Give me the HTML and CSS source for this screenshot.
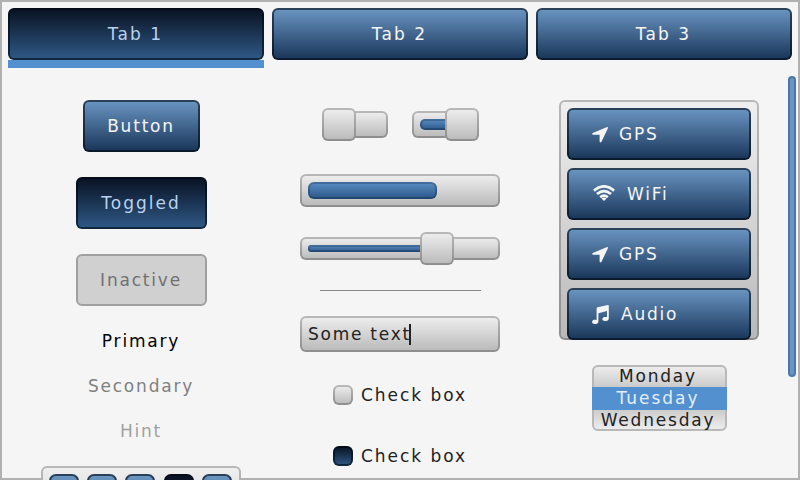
FILE: index.html
```html
<!DOCTYPE html>
<html lang="en">
<head>
<meta charset="utf-8">
<title>Widgets</title>
<link rel="stylesheet" href="styles.css">
</head>
<body>
<svg class="defs" width="0" height="0">
  <symbol id="gps" viewBox="0 0 16 16"><path d="M15.2 0 .7 6Q-.4 7 .9 7.8H7.6V14.6Q8.3 16.4 9.5 14.8L16 1.1Q16.1-.1 15.2 0Z"/></symbol>
</svg>
<div class="screen">
  <nav class="tabs">
    <div class="tab"><div class="btn on">Tab 1</div></div>
    <div class="tab"><div class="btn">Tab 2</div></div>
    <div class="tab"><div class="btn">Tab 3</div></div>
  </nav>
  <main class="page">
    <section class="col left">
      <div class="btn push">Button</div>
      <div class="btn push wide on">Toggled</div>
      <div class="btn push wide off">Inactive</div>
      <div class="label primary">Primary</div>
      <div class="label secondary">Secondary</div>
      <div class="label hint">Hint</div>
      <div class="keys panel"><i class="key"></i><i class="key"></i><i class="key"></i><i class="key on"></i><i class="key"></i></div>
    </section>
    <section class="col middle">
      <div class="switches">
        <div class="switch"><div class="panel knob"></div><div class="panel track after"></div></div>
        <div class="switch"><div class="panel track before"><div class="fill"></div></div><div class="panel knob"></div></div>
      </div>
      <div class="panel bar"><div class="fill"></div></div>
      <div class="panel slider"><div class="fill"></div><div class="panel knob"></div></div>
      <hr class="line">
      <div class="panel field">Some text<i class="caret"></i></div>
      <div class="check"><i class="panel box"></i>Check box</div>
      <div class="check second"><i class="box on"></i>Check box</div>
    </section>
    <section class="col right">
      <div class="panel list">
        <div class="btn item"><svg class="gps"><use href="#gps"/></svg>GPS</div>
        <div class="btn item"><svg class="wifi" viewBox="0 0 22 16"><g fill="none" stroke="#f5f5f5" stroke-width="2.7"><path d="M.9 5.6Q11-2.9 21.1 5.6M4 9.1Q11 3 18 9.1M7.2 12.3Q11 8.9 14.8 12.3"/></g><path d="M8.5 13.4Q11 11.8 13.5 13.4L11 16Z"/></svg>WiFi</div>
        <div class="btn item"><svg class="gps"><use href="#gps"/></svg>GPS</div>
        <div class="btn item"><svg class="audio" viewBox="0 0 17 19"><path d="M4.6 3.4Q4.6 2.5 5.5 2.2L15.8.1Q16.8-.1 16.8.9V13.4C16.8 16.5 10.3 17 10.3 14.1 10.3 11.9 13 11.6 15 12.1V6L6.4 8.2V16.4C6.4 19.6.1 19.9.1 17 .1 14.8 2.7 14.6 4.6 15.1Z"/></svg>Audio</div>
      </div>
      <div class="roller"><div>Monday</div><div class="picked">Tuesday</div><div>Wednesday</div></div>
    </section>
  </main>
  <div class="scroll"></div>
</div>
</body>
</html>
```
FILE: styles.css
```css
* { box-sizing: border-box; }
body {
  margin: 0;
  font: 17px/20px "DejaVu Sans", sans-serif;
  letter-spacing: 1.8px;
  color: #222;
}
.defs { position: absolute; }
.screen {
  position: relative;
  width: 800px;
  height: 480px;
  overflow: hidden;
  background: #f5f5f5;
  padding: 8px;
}
.screen::after {
  content: "";
  position: absolute;
  inset: 0;
  border: 2px solid #b0b0b0;
  z-index: 0;
}
.tabs { display: flex; gap: 8px; height: 60px; letter-spacing: 2.1px; }
.tab { flex: 1; }
.tab .btn { padding-right: 1px; }
.tab:first-child { background: linear-gradient(#5290d0, #5290d0) 0 52px no-repeat; }
.btn {
  display: flex;
  align-items: center;
  justify-content: center;
  height: 52px;
  border: 2px solid rgba(0, 8, 16, .6);
  border-radius: 6px;
  background: linear-gradient(#6b97c4, #183457) border-box;
  color: #f5f5f5;
}
.on {
  background: linear-gradient(#081020, #305a88) border-box;
  color: #b8d2ee;
}
.off { background: #d0d0d0; border-color: #a0a0a0; color: #707070; }
.panel {
  border: 2px solid rgba(0, 0, 0, .23);
  border-radius: 6px;
  background: linear-gradient(#f0f0f0, #b8b8b8) border-box;
}
.page {
  display: grid;
  grid-template-columns: 266px 252px 266px;
  padding-top: 32px;
}
.col { display: flex; flex-direction: column; align-items: center; }
.left { position: relative; z-index: 1; }
.push { width: 117px; margin-bottom: 25px; }
.push.wide { width: 131px; }
.push.on { letter-spacing: 2px; }
.label { margin-bottom: 25px; }
.primary { color: #000; }
.secondary { color: #808080; }
.hint { color: #a0a0a0; }
.keys {
  display: flex;
  gap: 8px;
  width: 200px;
  height: 100px;
  padding: 6px;
}
.key {
  flex: none;
  width: 30px;
  height: 80px;
  border: 2px solid rgba(0, 8, 16, .6);
  border-radius: 7px;
  background: linear-gradient(#6b97c4, #183457) border-box;
}
.key.on { margin-left: 1px; background: linear-gradient(#081020, #305a88) border-box; }
.middle { padding-top: 8px; }
.switches { display: flex; gap: 24px; }
.switch { display: flex; align-items: center; height: 33px; }
.knob { flex: none; width: 34px; height: 33px; position: relative; }
.track { height: 27px; }
.after { width: 38px; margin-left: -6px; }
.switch:first-child .knob { z-index: 1; }
.before { width: 39px; margin-right: -6px; padding: 6px; }
.fill {
  border: 2px solid rgba(0, 20, 40, .25);
  border-radius: 6px;
  background: linear-gradient(#5c8fc4, #2a5588) border-box;
}
.before .fill { width: 40px; height: 11px; border-radius: 5px; }
.before { overflow: hidden; }
.bar { width: 200px; height: 33px; margin-top: 33px; padding: 6px; }
.bar .fill { width: 129px; height: 17px; }
.slider {
  display: flex;
  align-items: center;
  width: 200px;
  height: 23px;
  margin-top: 30px;
  padding: 0 6px;
}
.slider .fill { width: 118px; height: 7px; border-radius: 3px; }
.slider .knob { margin-left: -6px; }
.line { width: 161px; height: 1px; margin: 30px 0 25px; border: 0; background: #888; }
.field {
  display: flex;
  align-items: center;
  width: 200px;
  height: 36px;
  padding: 0 6px;
  letter-spacing: 1.75px;
}
.caret { width: 2px; height: 21px; margin-left: -2px; background: #222; }
.check { display: flex; align-items: center; gap: 8px; width: 134px; margin-top: 33px; white-space: nowrap; letter-spacing: 1.95px; }
.check.second { margin-top: 41px; }
.box { width: 20px; height: 20px; border: 2px solid rgba(0, 0, 0, .23); border-radius: 6px; }
.box.on { border-color: rgba(0, 8, 16, .6); }
.list { width: 200px; height: 240px; padding: 6px; }
.item { justify-content: flex-start; margin-bottom: 8px; padding-left: 22px; }
.item svg { fill: #f5f5f5; flex: none; }
.gps { width: 16px; height: 16px; margin: 2px 11px 0 1px; }
.wifi { width: 22px; height: 16px; margin: 0 12px 2px 2px; }
.audio { width: 17px; height: 19px; margin: 1px 12px 0 1px; }
.roller {
  width: 135px;
  height: 66px;
  margin-top: 25px;
  padding-right: 0;
  border-radius: 6px;
  background: linear-gradient(#f0f0f0, #b8b8b8 50%, #f0f0f0);
  box-shadow: inset 0 0 0 2px #b8b8b8;
  text-align: center;
  line-height: 22px;
}
.roller div { padding-right: 2px; }
.picked { height: 23px; margin-bottom: -1px; background: #5290d0; color: #e4edf8; letter-spacing: 2px; }
.scroll {
  position: absolute;
  left: 788px;
  top: 76px;
  width: 8px;
  height: 301px;
  border: 2px solid #4c78a8;
  border-radius: 4px;
  background: #6895c4;
}
```
